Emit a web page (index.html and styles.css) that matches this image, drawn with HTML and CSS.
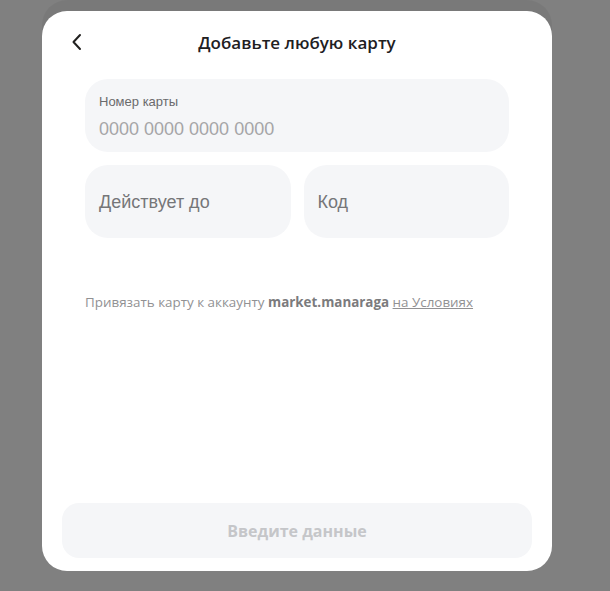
FILE: index.html
```html
<!DOCTYPE html>
<html lang="ru">
<head>
  <meta charset="UTF-8" />
  <title>Добавьте любую карту</title>
  <link rel="stylesheet" href="styles.css">
</head>
<body>

<div class="modal">
  <div class="header">
    <button class="back" type="button">
      <svg width="12" height="18" viewBox="0 0 12 18"><path d="M9 2 L2.5 9 L9 16" fill="none" stroke="#21201f" stroke-width="2" stroke-linecap="round" stroke-linejoin="round"/></svg>
    </button>
    <h2>Добавьте любую карту</h2>
  </div>

  <div class="fields">
    <div class="field field-number">
      <span class="label">Номер карты</span>
      <span class="placeholder">0000 0000 0000 0000</span>
    </div>
    <div class="row">
      <div class="field"><span class="hint">Действует до</span></div>
      <div class="field"><span class="hint">Код</span></div>
    </div>
    <p class="terms">Привязать карту к аккаунту <b>market.manaraga</b> <a href="#">на Условиях</a></p>
  </div>

  <button class="submit" type="button" disabled>Введите данные</button>
</div>

</body>
</html>
```

FILE: styles.css
```css
body {
  margin: 0;
  background: #808080;
  font-family: "Open Sans", Arial, sans-serif;
}
.modal {
  width: 510px;
  height: 560px;
  margin: 11px 0 0 42px;
  padding: 0 20px 13px;
  box-sizing: border-box;
  background: #fff;
  border-radius: 25px;
  box-shadow: 0 -11px 0 0 rgba(0, 0, 0, 0.05);
  display: flex;
  flex-direction: column;
}
.header {
  height: 62px;
  display: flex;
  align-items: center;
  justify-content: center;
  position: relative;
}
.back {
  position: absolute;
  left: 9px;
  top: 22px;
  padding: 0;
  border: 0;
  background: none;
  line-height: 0;
}
h2 {
  margin: 0;
  font-size: 17px;
  font-weight: 600;
  color: #21201f;
}
.fields {
  margin: 6px 23px 0;
  display: flex;
  flex-direction: column;
  gap: 13px;
}
.field {
  height: 73px;
  box-sizing: border-box;
  background: #f5f6f8;
  border-radius: 23px;
  padding: 0 14px;
  display: flex;
  flex-direction: column;
  justify-content: center;
  font-family: "Liberation Sans", Arial, sans-serif;
}
.field-number {
  justify-content: flex-start;
  padding-top: 15px;
}
.row {
  display: flex;
  gap: 13px;
}
.row .field {
  flex: 1;
}
.label {
  font-size: 13px;
  color: #6a6a6c;
}
.placeholder {
  margin-top: 10px;
  font-size: 18px;
  color: #a5a5a7;
}
.hint {
  font-size: 18px;
  color: #767678;
  padding-top: 2px;
}
.terms {
  margin: 42px 0 0;
  font-size: 13.4px;
  color: #919193;
}
.terms b {
  color: #7b7b7d;
  font-weight: 700;
}
.terms a {
  color: #919193;
  text-decoration: underline;
}
.submit {
  margin-top: auto;
  height: 55px;
  border: 0;
  border-radius: 17px;
  background: #f5f6f8;
  color: #c5c6c9;
  font-family: "Open Sans", Arial, sans-serif;
  font-size: 16px;
  font-weight: 700;
}
```
